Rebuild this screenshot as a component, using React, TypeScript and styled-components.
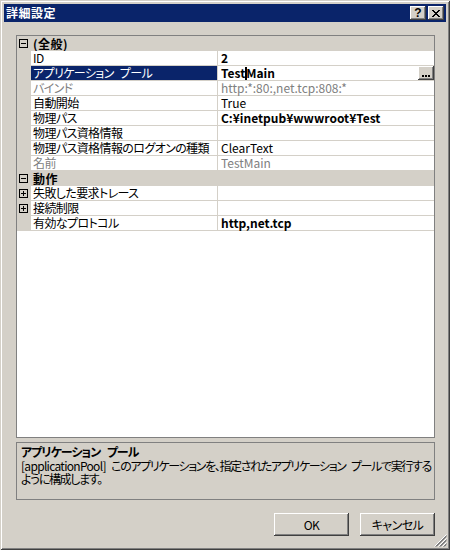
import React from "react";
import styled, { createGlobalStyle } from "styled-components";

const GlobalStyle = createGlobalStyle`
  html, body { margin: 0; padding: 0; background: #d4d0c8; }
  body {
    font-family: "Noto Sans CJK JP", "Noto Sans", sans-serif;
    font-size: 12px;
    color: #000;
    font-feature-settings: "palt";
  }
  * { box-sizing: border-box; }
`;

const Window = styled.div`
  position: relative;
  width: 450px;
  height: 550px;
  padding: 4px;
  display: flex;
  flex-direction: column;
  background: #d4d0c8;
  box-shadow: inset 1px 1px #d4d0c8, inset -1px -1px #404040,
    inset 2px 2px #ffffff, inset -2px -2px #808080;
`;

const TitleBar = styled.div`
  height: 18px;
  flex: none;
  display: flex;
  align-items: center;
  padding: 0 2px;
  background: #0a246a;
`;

const Title = styled.span`
  flex: 1;
  color: #fff;
  font-weight: bold;
  font-size: 12px;
  line-height: 18px;
  letter-spacing: 0.5px;
`;

const CaptionButtons = styled.div`
  display: flex;
  gap: 2px;
`;

const CaptionButton = styled.div`
  width: 16px;
  height: 14px;
  display: flex;
  align-items: center;
  justify-content: center;
  background: #d4d0c8;
  box-shadow: inset -1px -1px #404040, inset 1px 1px #ffffff,
    inset -2px -2px #808080, inset 2px 2px #d4d0c8;
  font-family: "Liberation Sans", Arial, sans-serif;
  font-weight: bold;
  font-size: 12px;
  line-height: 14px;
  color: #000;
`;

const Body = styled.div`
  flex: 1;
  display: flex;
  flex-direction: column;
  padding: 13px 11px 10px 12px;
`;

const Grid = styled.div`
  flex: 1;
  display: flex;
  flex-direction: column;
  background: #fff;
  border: 1px solid #808080;
`;

const Row = styled.div`
  display: flex;
  height: 15px;
  flex: none;
`;

const CategoryRow = styled(Row)`
  background: #d4d0c8;
`;

const Gutter = styled.div`
  width: 14px;
  flex: none;
  padding: 3px 0 0 2px;
  background: #d4d0c8;
  display: flex;
  align-items: flex-start;
`;

const CategoryLabel = styled.div`
  padding-left: 2px;
  font-weight: bold;
  line-height: 15px;
  letter-spacing: 0.5px;
`;

const Label = styled.div<{ $selected?: boolean; $disabled?: boolean }>`
  width: 186px;
  flex: none;
  padding-left: 2px;
  line-height: 14px;
  letter-spacing: -0.6px;
  word-spacing: 4px;
  white-space: nowrap;
  border-bottom: 1px solid #d4d0c8;
  background: ${(p) => (p.$selected ? "#0a246a" : "#fff")};
  color: ${(p) => (p.$selected ? "#fff" : p.$disabled ? "#808080" : "#000")};
`;

const Value = styled.div<{ $bold?: boolean; $disabled?: boolean }>`
  flex: 1;
  min-width: 0;
  display: flex;
  align-items: flex-start;
  padding-left: 3px;
  line-height: 14px;
  white-space: nowrap;
  border-left: 1px solid #d4d0c8;
  border-bottom: 1px solid #d4d0c8;
  font-weight: ${(p) => (p.$bold ? "bold" : "normal")};
  color: ${(p) => (p.$disabled ? "#808080" : "#000")};
`;

const ValueText = styled.span`
  flex: 1;
  min-width: 0;
`;

const Caret = styled.span`
  display: inline-block;
  width: 2px;
  height: 13px;
  margin-right: -1px;
  vertical-align: -2px;
  background: #000;
`;

const EllipsisButton = styled.div`
  width: 16px;
  height: 14px;
  flex: none;
  display: flex;
  align-items: flex-end;
  justify-content: center;
  padding-bottom: 3px;
  background: #d4d0c8;
  box-shadow: inset -1px -1px #404040, inset 1px 1px #ffffff,
    inset -2px -2px #808080;
`;

const Description = styled.div`
  height: 58px;
  flex: none;
  margin-top: 4px;
  padding: 2px 4px;
  border: 1px solid #808080;
  background: #d4d0c8;
`;

const DescTitle = styled.div`
  font-weight: bold;
  line-height: 14px;
  letter-spacing: -1px;
  word-spacing: 5px;
`;

const DescText = styled.div`
  margin-top: 1px;
  line-height: 12px;
  white-space: nowrap;
  letter-spacing: -1.35px;
  word-spacing: 4px;
`;

const Ident = styled.span`
  letter-spacing: -0.7px;
`;

const ButtonRow = styled.div`
  flex: none;
  display: flex;
  justify-content: flex-end;
  gap: 11px;
  margin-top: 13px;
`;

const PushButton = styled.div`
  width: 75px;
  height: 23px;
  display: flex;
  align-items: center;
  justify-content: center;
  background: #d4d0c8;
  box-shadow: inset -1px -1px #404040, inset 1px 1px #ffffff,
    inset -2px -2px #808080, inset 2px 2px #d4d0c8;
  line-height: 14px;
  letter-spacing: -0.5px;
`;

const Grip = styled.svg`
  position: absolute;
  right: 3px;
  bottom: 3px;
`;

const ExpandBox = ({ plus }: { plus?: boolean }) => (
  <svg width="9" height="9" viewBox="0 0 9 9" shapeRendering="crispEdges">
    <rect x="0.5" y="0.5" width="8" height="8" fill="none" stroke="#000" />
    <path d="M2 4.5H7" stroke="#000" />
    {plus && <path d="M4.5 2V7" stroke="#000" />}
  </svg>
);

const CloseGlyph = () => {
  const px: [number, number, number][] = [
    [0, 0, 2], [6, 0, 2],
    [1, 1, 2], [5, 1, 2],
    [2, 2, 4],
    [3, 3, 2],
    [2, 4, 4],
    [1, 5, 2], [5, 5, 2],
    [0, 6, 2], [6, 6, 2],
  ];
  return (
    <svg width="8" height="7" viewBox="0 0 8 7" shapeRendering="crispEdges">
      {px.map(([x, y, w], i) => (
        <rect key={i} x={x} y={y} width={w} height={1} fill="#000" />
      ))}
    </svg>
  );
};

const Dots = () => (
  <svg width="8" height="2" viewBox="0 0 8 2" shapeRendering="crispEdges">
    <rect x="0" y="0" width="2" height="2" fill="#000" />
    <rect x="3" y="0" width="2" height="2" fill="#000" />
    <rect x="6" y="0" width="2" height="2" fill="#000" />
  </svg>
);

type Item =
  | { kind: "category"; label: string }
  | {
      kind: "prop";
      label: string;
      value?: string;
      bold?: boolean;
      disabled?: boolean;
      selected?: boolean;
      caretAt?: number;
      ellipsis?: boolean;
      expander?: boolean;
    };

const items: Item[] = [
  { kind: "category", label: "(全般)" },
  { kind: "prop", label: "ID", value: "2", bold: true },
  {
    kind: "prop",
    label: "アプリケーション プール",
    value: "TestMain",
    bold: true,
    selected: true,
    caretAt: 4,
    ellipsis: true,
  },
  { kind: "prop", label: "バインド", value: "http:*:80:,net.tcp:808:*", disabled: true },
  { kind: "prop", label: "自動開始", value: "True" },
  { kind: "prop", label: "物理パス", value: "C:¥inetpub¥wwwroot¥Test", bold: true },
  { kind: "prop", label: "物理パス資格情報", value: "" },
  { kind: "prop", label: "物理パス資格情報のログオンの種類", value: "ClearText" },
  { kind: "prop", label: "名前", value: "TestMain", disabled: true },
  { kind: "category", label: "動作" },
  { kind: "prop", label: "失敗した要求トレース", value: "", expander: true },
  { kind: "prop", label: "接続制限", value: "", expander: true },
  { kind: "prop", label: "有効なプロトコル", value: "http,net.tcp", bold: true },
];

export default function App() {
  return (
    <>
      <GlobalStyle />
      <Window>
        <TitleBar>
          <Title>詳細設定</Title>
          <CaptionButtons>
            <CaptionButton>?</CaptionButton>
            <CaptionButton>
              <CloseGlyph />
            </CaptionButton>
          </CaptionButtons>
        </TitleBar>
        <Body>
          <Grid>
            {items.map((it, i) =>
              it.kind === "category" ? (
                <CategoryRow key={i}>
                  <Gutter>
                    <ExpandBox />
                  </Gutter>
                  <CategoryLabel>{it.label}</CategoryLabel>
                </CategoryRow>
              ) : (
                <Row key={i}>
                  <Gutter>{it.expander && <ExpandBox plus />}</Gutter>
                  <Label $selected={it.selected} $disabled={it.disabled}>
                    {it.label}
                  </Label>
                  <Value $bold={it.bold} $disabled={it.disabled}>
                    <ValueText>
                      {it.caretAt !== undefined && it.value ? (
                        <>
                          {it.value.slice(0, it.caretAt)}
                          <Caret />
                          {it.value.slice(it.caretAt)}
                        </>
                      ) : (
                        it.value
                      )}
                    </ValueText>
                    {it.ellipsis && (
                      <EllipsisButton>
                        <Dots />
                      </EllipsisButton>
                    )}
                  </Value>
                </Row>
              )
            )}
          </Grid>
          <Description>
            <DescTitle>アプリケーション プール</DescTitle>
            <DescText>
              <Ident>[applicationPool]</Ident> このアプリケーションを、指定されたアプリケーション プールで実行する
            </DescText>
            <DescText>ように構成します。</DescText>
          </Description>
          <ButtonRow>
            <PushButton>OK</PushButton>
            <PushButton>キャンセル</PushButton>
          </ButtonRow>
        </Body>
        <Grip width="13" height="13" viewBox="0 0 13 13">
          {[0, 4, 8].map((o) => (
            <g key={o}>
              <path d={`M${12.5} ${o + 0.5} L${o + 0.5} 12.5`} stroke="#fff" />
              <path d={`M${12.5} ${o + 1.5} L${o + 1.5} 12.5`} stroke="#808080" />
              <path d={`M${12.5} ${o + 2.5} L${o + 2.5} 12.5`} stroke="#808080" />
            </g>
          ))}
        </Grip>
      </Window>
    </>
  );
}
